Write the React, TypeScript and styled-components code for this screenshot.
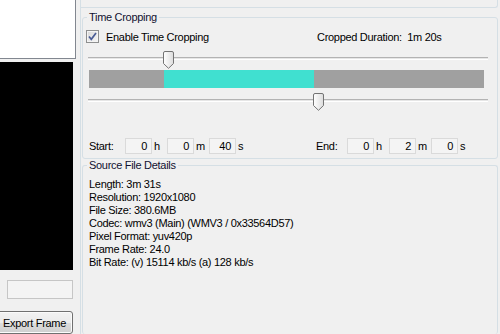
import React from "react";
import styled, { createGlobalStyle } from "styled-components";

// clip data (seconds)
const TOTAL = 211;
const cropStart = 40;
const cropEnd = 120;
const BAR_WIDTH = 395;

const details = [
    "Length: 3m 31s",
    "Resolution: 1920x1080",
    "File Size: 380.6MB",
    "Codec: wmv3 (Main) (WMV3 / 0x33564D57)",
    "Pixel Format: yuv420p",
    "Frame Rate: 24.0",
    "Bit Rate: (v) 15114 kb/s (a) 128 kb/s",
];

const GlobalStyle = createGlobalStyle`
    html, body {
        margin: 0;
        padding: 0;
    }
    body {
        background: #f0f0f0;
        font-family: "Liberation Sans", Arial, sans-serif;
        font-size: 11px;
        letter-spacing: -0.3px;
        color: #000;
        overflow: hidden;
    }
`;

const App = () => {
    const startFrac = cropStart / TOTAL;
    const endFrac = cropEnd / TOTAL;

    return (
        <>
            <GlobalStyle />
            <Window>
                <LeftColumn>
                    <PreviewTop />
                    <VideoArea />
                    <FrameBox />
                    <ExportButton>Export Frame</ExportButton>
                </LeftColumn>

                <RightColumn>
                    <TopGroup />

                    <Group $top={3}>
                        <GroupTitle>Time Cropping</GroupTitle>
                        <TimeInner>
                            <CheckRow>
                                <CheckLabel>
                                    <CheckBox>
                                        <svg width="11" height="11" viewBox="0 0 11 11">
                                            <path
                                                d="M2 5.5 L4.3 8.3 L9 2"
                                                fill="none"
                                                stroke="#4a5c95"
                                                strokeWidth="1.7"
                                            />
                                        </svg>
                                    </CheckBox>
                                    Enable Time Cropping
                                </CheckLabel>
                                <Duration>Cropped Duration:  1m 20s</Duration>
                            </CheckRow>

                            <Slider $top={8}>
                                <Track />
                                <Thumb style={{ left: startFrac * BAR_WIDTH }} />
                            </Slider>

                            <CropBar>
                                <Segment $teal={false} style={{ width: startFrac * BAR_WIDTH }} />
                                <Segment $teal style={{ width: (endFrac - startFrac) * BAR_WIDTH }} />
                                <Segment $teal={false} style={{ flex: 1 }} />
                            </CropBar>

                            <Slider $top={5}>
                                <Track />
                                <Thumb style={{ left: endFrac * BAR_WIDTH }} />
                            </Slider>

                            <TimeRow>
                                <TimeGroup>
                                    <TimeLabel $width={36}>Start:</TimeLabel>
                                    <TimeBox>0</TimeBox>
                                    <Unit>h</Unit>
                                    <TimeBox>0</TimeBox>
                                    <Unit>m</Unit>
                                    <TimeBox>40</TimeBox>
                                    <Unit>s</Unit>
                                </TimeGroup>
                                <TimeGroup>
                                    <TimeLabel $width={31}>End:</TimeLabel>
                                    <TimeBox>0</TimeBox>
                                    <Unit>h</Unit>
                                    <TimeBox>2</TimeBox>
                                    <Unit>m</Unit>
                                    <TimeBox>0</TimeBox>
                                    <Unit>s</Unit>
                                </TimeGroup>
                            </TimeRow>
                        </TimeInner>
                    </Group>

                    <Group $top={0} $open>
                        <GroupTitle>Source File Details</GroupTitle>
                        <DetailList>
                            {details.map((line) => (
                                <DetailLine key={line}>{line}</DetailLine>
                            ))}
                        </DetailList>
                    </Group>
                </RightColumn>
            </Window>
        </>
    );
};

export default App;

const Window = styled.div`
    display: flex;
    width: 500px;
    height: 334px;
    overflow: hidden;
    background: #f0f0f0;
`;

const LeftColumn = styled.div`
    flex: none;
    width: 80px;
    display: flex;
    flex-direction: column;
`;

const PreviewTop = styled.div`
    width: 75px;
    height: 58px;
    background: #fff;
    border-right: 1px solid #828790;
    border-bottom: 1px solid #828790;
`;

const VideoArea = styled.div`
    width: 73px;
    height: 210px;
    margin-top: 3px;
    background: #000;
`;

const FrameBox = styled.div`
    box-sizing: border-box;
    width: 66px;
    height: 19px;
    margin: 10px 0 0 7px;
    border: 1px solid #c6c6c6;
    background: #f4f4f4;
`;

const ExportButton = styled.button`
    box-sizing: border-box;
    width: 77px;
    height: 23px;
    margin: 12px 0 0 -4px;
    padding: 0;
    border: 1px solid #707070;
    border-radius: 3px;
    background: linear-gradient(#f2f2f2 0%, #ebebeb 50%, #dddddd 50%, #cfcfcf 100%);
    box-shadow: inset 0 0 0 1px #fbfbfb;
    font-family: "Liberation Sans", Arial, sans-serif;
    font-size: 11px;
    letter-spacing: -0.3px;
    color: #000;
    text-align: center;
`;

const RightColumn = styled.div`
    flex: 1;
    min-width: 0;
    display: flex;
    flex-direction: column;
    border-left: 1px solid #d5dfe5;
`;

const TopGroup = styled.div`
    flex: none;
    height: 7px;
    margin-right: 2px;
    border-right: 1px solid #d5dfe5;
    border-bottom: 1px solid #d5dfe5;
    border-bottom-right-radius: 3px;
`;

const Group = styled.fieldset<{ $top: number; $open?: boolean }>`
    margin: ${(p) => p.$top}px 2px 0 1px;
    padding: 0;
    min-width: 0;
    border: 1px solid #d5dfe5;
    border-radius: 3px;
    ${(p) => (p.$open ? "flex: 1; border-bottom: none;" : "")}
`;

const GroupTitle = styled.legend`
    margin-left: 4px;
    padding: 0 2px;
    line-height: 13px;
    color: #101030;
`;

const TimeInner = styled.div`
    display: flex;
    flex-direction: column;
    padding: 0 8px 4px 5px;
`;

const CheckRow = styled.div`
    display: grid;
    grid-template-columns: 231px auto;
    align-items: center;
    height: 13px;
    margin: 6px 0 0 -2px;
`;

const CheckLabel = styled.label`
    display: flex;
    align-items: center;
    gap: 7px;
`;

const CheckBox = styled.span`
    box-sizing: border-box;
    width: 13px;
    height: 13px;
    display: flex;
    align-items: center;
    justify-content: center;
    border: 1px solid #8e8f8f;
    background: linear-gradient(135deg, #d8d8d8, #f6f6f6);
    box-shadow: inset 0 0 0 1px #f4f4f4;
`;

const Duration = styled.span`
    white-space: pre;
`;

const Slider = styled.div<{ $top: number }>`
    position: relative;
    width: 400px;
    height: 18px;
    margin-top: ${(p) => p.$top}px;
`;

const Track = styled.div`
    box-sizing: border-box;
    width: 400px;
    height: 3px;
    margin-top: 6px;
    border-top: 1px solid #b3b3b3;
    border-bottom: 1px solid #ffffff;
    background: #e6e6e6;
`;

const Thumb = styled.div`
    position: absolute;
    top: 0;
    width: 11px;
    height: 18px;
    background: no-repeat
        url("data:image/svg+xml;utf8,<svg xmlns='http://www.w3.org/2000/svg' width='11' height='18' viewBox='0 0 11 18'><defs><linearGradient id='g' x1='0' x2='1'><stop offset='0' stop-color='%23ffffff'/><stop offset='1' stop-color='%23dcdcdc'/></linearGradient></defs><path d='M2 0.5 H9 A1.5 1.5 0 0 1 10.5 2 V12.5 L5.5 17.3 L0.5 12.5 V2 A1.5 1.5 0 0 1 2 0.5 Z' fill='url(%23g)' stroke='%23737373'/></svg>");
`;

const CropBar = styled.div`
    display: flex;
    width: ${BAR_WIDTH}px;
    height: 18px;
    margin: 1px 0 0 1px;
`;

const Segment = styled.div<{ $teal: boolean }>`
    height: 100%;
    background: ${(p) => (p.$teal ? "#40e0d0" : "#a0a0a0")};
`;

const TimeRow = styled.div`
    display: grid;
    grid-template-columns: 227px auto;
    margin: 27px 0 0 1px;
`;

const TimeGroup = styled.div`
    display: flex;
    align-items: center;
    height: 16px;
`;

const TimeLabel = styled.span<{ $width: number }>`
    width: ${(p) => p.$width}px;
`;

const TimeBox = styled.span`
    box-sizing: border-box;
    width: 27px;
    height: 16px;
    padding-right: 4px;
    border: 1px solid #dadada;
    background: #f4f4f4;
    text-align: right;
    line-height: 14px;
`;

const Unit = styled.span`
    width: 15px;
    padding-left: 2px;
    box-sizing: border-box;
`;

const DetailList = styled.div`
    padding: 6px 0 0 6px;
`;

const DetailLine = styled.div`
    line-height: 13px;
`;
